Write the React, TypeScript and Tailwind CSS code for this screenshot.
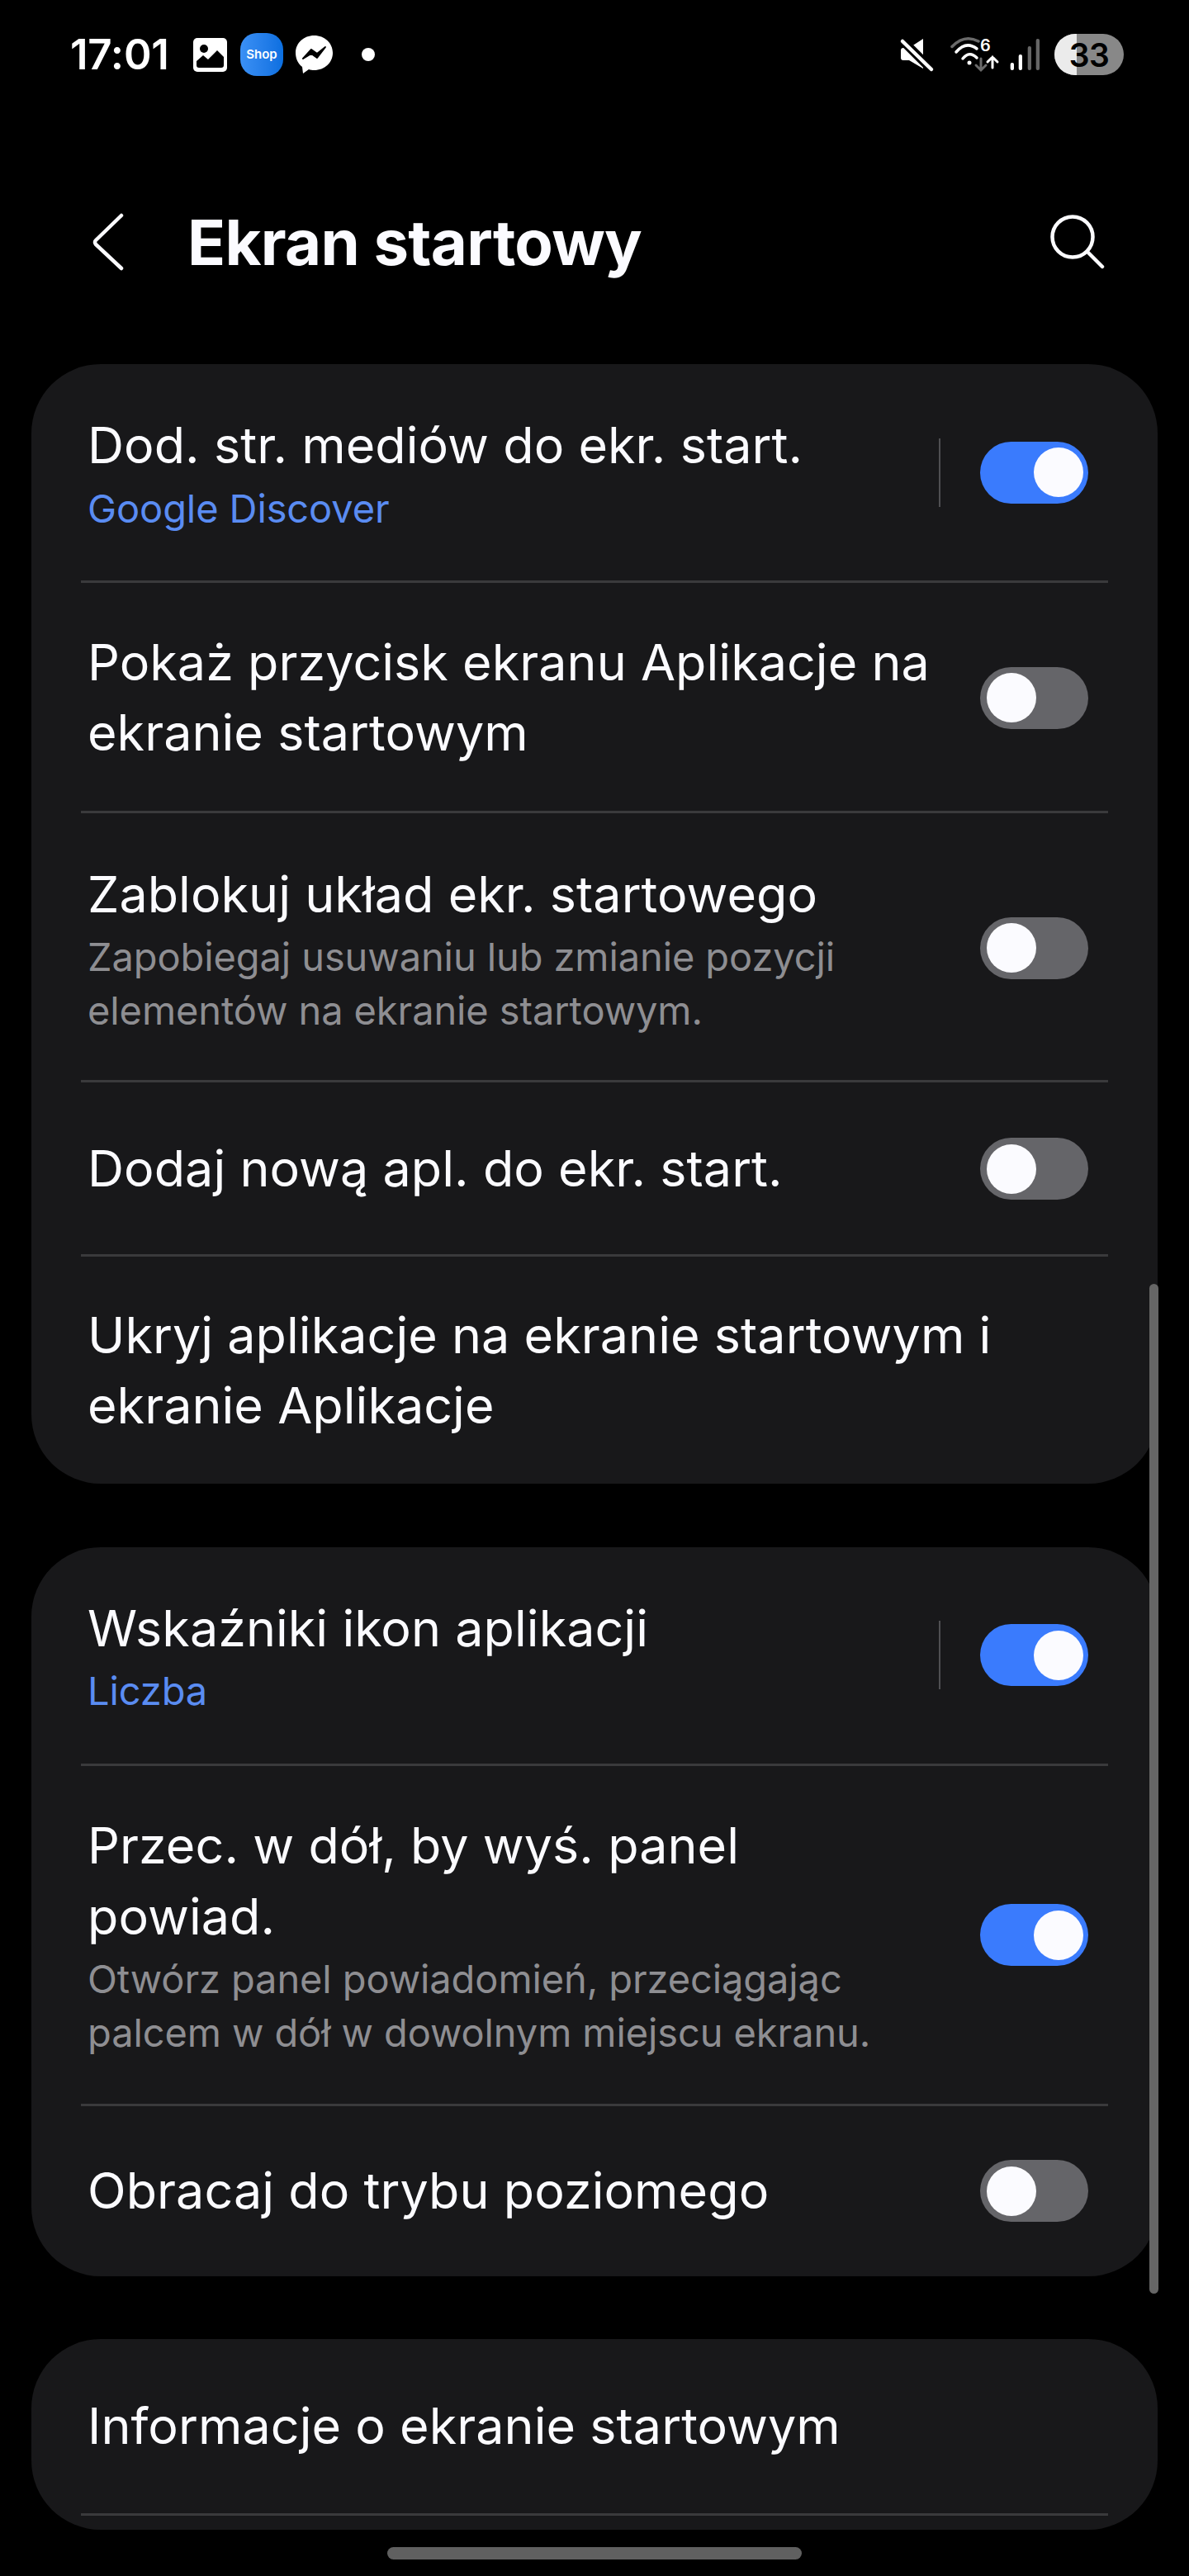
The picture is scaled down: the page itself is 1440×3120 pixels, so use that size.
import React from 'react';

const FONT = 'font-["Inter","Noto_Sans",sans-serif]';

function Toggle({ on }: { on: boolean }) {
  return (
    <div
      className={`flex h-[75px] w-[131px] shrink-0 items-center rounded-full ${
        on ? 'justify-end bg-[#3a7bfd] pr-[6px]' : 'justify-start bg-[#656569] pl-[8px]'
      }`}
    >
      <div className="h-[60px] w-[60px] rounded-full bg-[#fbfbff]" />
    </div>
  );
}

type RowProps = {
  title: string;
  blue?: string;
  sub?: string;
  toggle?: boolean;
  split?: boolean;
  pad: string;
};

function Row({ title, blue, sub, toggle, split, pad }: RowProps) {
  return (
    <div className={`flex items-center pl-[68px] pr-[84px] ${pad}`}>
      <div className="min-w-0 flex-1">
        <div className="whitespace-pre text-[61px] leading-[85.5px] tracking-[0.05px] text-[#fbfbff]">{title}</div>
        {blue && <div className="text-[47px] leading-[65px] tracking-[-0.1px] text-[#5a8cf2]">{blue}</div>}
        {sub && <div className="whitespace-pre text-[47px] leading-[65px] tracking-[-0.1px] text-[#8e8e92]">{sub}</div>}
      </div>
      {split && <div className="mr-[48px] h-[83px] w-[2px] shrink-0 bg-[#4f4f52]" />}
      {toggle !== undefined && <Toggle on={toggle} />}
    </div>
  );
}

function Line() {
  return <div className="mx-[60px] h-[3px] bg-[#3a3a3c]" />;
}

function StatusBar() {
  return (
    <div className="flex h-[132px] items-center pl-[85px] pr-[79px]">
      <span className="w-[122px] text-[51px] font-semibold tracking-[-0.2px] text-white">17:01</span>
      <svg className="ml-[27px]" width="41" height="41" viewBox="0 0 41 41">
        <rect width="41" height="41" rx="5" fill="#fff" />
        <circle cx="13" cy="13" r="5" fill="#000" />
        <path d="M4 28 L12 21 L18 26 L29 15 L37 23 L37 33 Q37 36 34 36 L7 36 Q4 36 4 33 Z" fill="#000" />
      </svg>
      <div className="ml-[16px] flex h-[52px] w-[52px] items-center justify-center rounded-[20px] bg-gradient-to-r from-[#3a90f5] to-[#0b6fe0] text-[15px] font-semibold text-white">
        Shop
      </div>
      <svg className="ml-[15px]" width="45" height="46" viewBox="0 0 45 46">
        <path d="M22.5 0 C35 0 45 9 45 21 C45 33 35 42 22.5 42 C20 42 18 41.7 16 41 L9 46 L8 38 C3 34 0 28 0 21 C0 9 10 0 22.5 0 Z" fill="#fff" />
        <path d="M9 28 L19 17 L26 22 L36 14 L26 27 L19 22 Z" fill="#000" stroke="#000" strokeWidth="2" strokeLinejoin="round" />
      </svg>
      <div className="ml-[35px] h-[16px] w-[16px] rounded-full bg-white" />

      <svg className="ml-auto" width="46" height="44" viewBox="0 0 46 44">
        <path d="M3 17 Q3 14 6 14 L13 14 L30 3 L30 39 L13 29 L6 29 Q3 29 3 26 Z" fill="#fff" />
        <path d="M1 1 L44 44" stroke="#000" strokeWidth="11" />
        <path d="M5 6 L40 40" stroke="#fff" strokeWidth="4.5" strokeLinecap="round" />
      </svg>
      <svg className="ml-[16px]" width="62" height="48" viewBox="0 -2 62 48" fill="none" strokeLinecap="round">
        <path d="M3 12.5 Q18 -3 35 6" stroke="#6a6a6a" strokeWidth="3.5" />
        <path d="M8 19 Q20 5 33 15" stroke="#fff" strokeWidth="3.5" />
        <path d="M16 27 Q24 17 33 26" stroke="#fff" strokeWidth="3.5" />
        <circle cx="24" cy="32" r="2.5" fill="#fff" />
        <text x="37" y="18" fontSize="20" fontWeight="600" fill="#fff" fontFamily="Inter">6</text>
        <path d="M38 27 L38 41 M32 35 L38 41 L44 35" stroke="#6a6a6a" strokeWidth="3" />
        <path d="M52 25 L52 38 M46 31 L52 25 L58 31" stroke="#fff" strokeWidth="3" />
      </svg>
      <svg className="ml-[10px]" width="37" height="42" viewBox="0 0 37 42">
        <rect x="1.7" y="31" width="4.3" height="9" rx="2" fill="#fff" />
        <rect x="11.7" y="21" width="4.3" height="19" rx="2" fill="#fff" />
        <rect x="22.7" y="11" width="4.3" height="29" rx="2" fill="#666" />
        <rect x="32.7" y="2" width="4.3" height="38" rx="2" fill="#666" />
      </svg>
      <div className="relative ml-[18px] flex h-[50px] w-[84px] items-center justify-center overflow-hidden rounded-full bg-[#888888]">
        <div className="absolute inset-y-0 left-0 w-[27px] bg-[#ebebeb]" />
        <span className="relative text-[39px] font-semibold leading-none tracking-[-0.5px] text-black">33</span>
      </div>
    </div>
  );
}

function Header() {
  return (
    <div className="mt-[95px] flex h-[132px] items-center pl-[112px] pr-[102px]">
      <svg width="38" height="70" viewBox="0 0 38 70" fill="none">
        <path d="M35 3 L4 33 Q2 35 4 38 L35 67" stroke="#fbfbff" strokeWidth="4.5" strokeLinecap="round" />
      </svg>
      <h1 className="ml-[77px] text-[76px] font-bold tracking-[-0.7px] text-[#fbfbff]">Ekran startowy</h1>
      <svg className="ml-auto" width="66" height="66" viewBox="0 0 66 66" fill="none" stroke="#fbfbff" strokeWidth="4.5" strokeLinecap="round">
        <circle cx="27" cy="27" r="24.5" />
        <path d="M45 45 L63 63" />
      </svg>
    </div>
  );
}

export default function App() {
  return (
    <div className={`relative h-[3120px] w-[1440px] overflow-hidden bg-black ${FONT}`}>
      <StatusBar />
      <Header />

      <div className="mx-[38px] mt-[82px] rounded-[84px] bg-[#18181a]">
        <Row title="Dod. str. mediów do ekr. start." blue="Google Discover" toggle split pad="pt-[56px] pb-[55px]" />
        <Line />
        <Row title={'Pokaż przycisk ekranu Aplikacje na\nekranie startowym'} toggle={false} pad="pt-[54px] pb-[51px]" />
        <Line />
        <Row
          title="Zablokuj układ ekr. startowego"
          sub={'Zapobiegaj usuwaniu lub zmianie pozycji\nelementów na ekranie startowym.'}
          toggle={false}
          pad="pt-[56px] pb-[52px]"
        />
        <Line />
        <Row title="Dodaj nową apl. do ekr. start." toggle={false} pad="pt-[62px] pb-[60px]" />
        <Line />
        <Row title={'Ukryj aplikacje na ekranie startowym i\nekranie Aplikacje'} pad="pt-[53px] pb-[51px]" />
      </div>

      <div className="mx-[38px] mt-[77px] rounded-[84px] bg-[#18181a]">
        <Row title="Wskaźniki ikon aplikacji" blue="Liczba" toggle split pad="py-[56px]" />
        <Line />
        <Row
          title={'Przec. w dół, by wyś. panel\npowiad.'}
          sub={'Otwórz panel powiadomień, przeciągając\npalcem w dół w dowolnym miejscu ekranu.'}
          toggle
          pad="py-[54px]"
        />
        <Line />
        <Row title="Obracaj do trybu poziomego" toggle={false} pad="py-[60px]" />
      </div>

      <div className="mx-[38px] mt-[76px] h-[231px] overflow-hidden rounded-[84px] bg-[#18181a]">
        <Row title="Informacje o ekranie startowym" pad="py-[63px]" />
        <Line />
      </div>

      <div className="mx-auto mt-[21px] h-[15px] w-[502px] rounded-full bg-[#606060]" />

      <div className="absolute left-[1392px] top-[1555px] h-[1223px] w-[11px] rounded-full bg-[#666666]" />
    </div>
  );
}
